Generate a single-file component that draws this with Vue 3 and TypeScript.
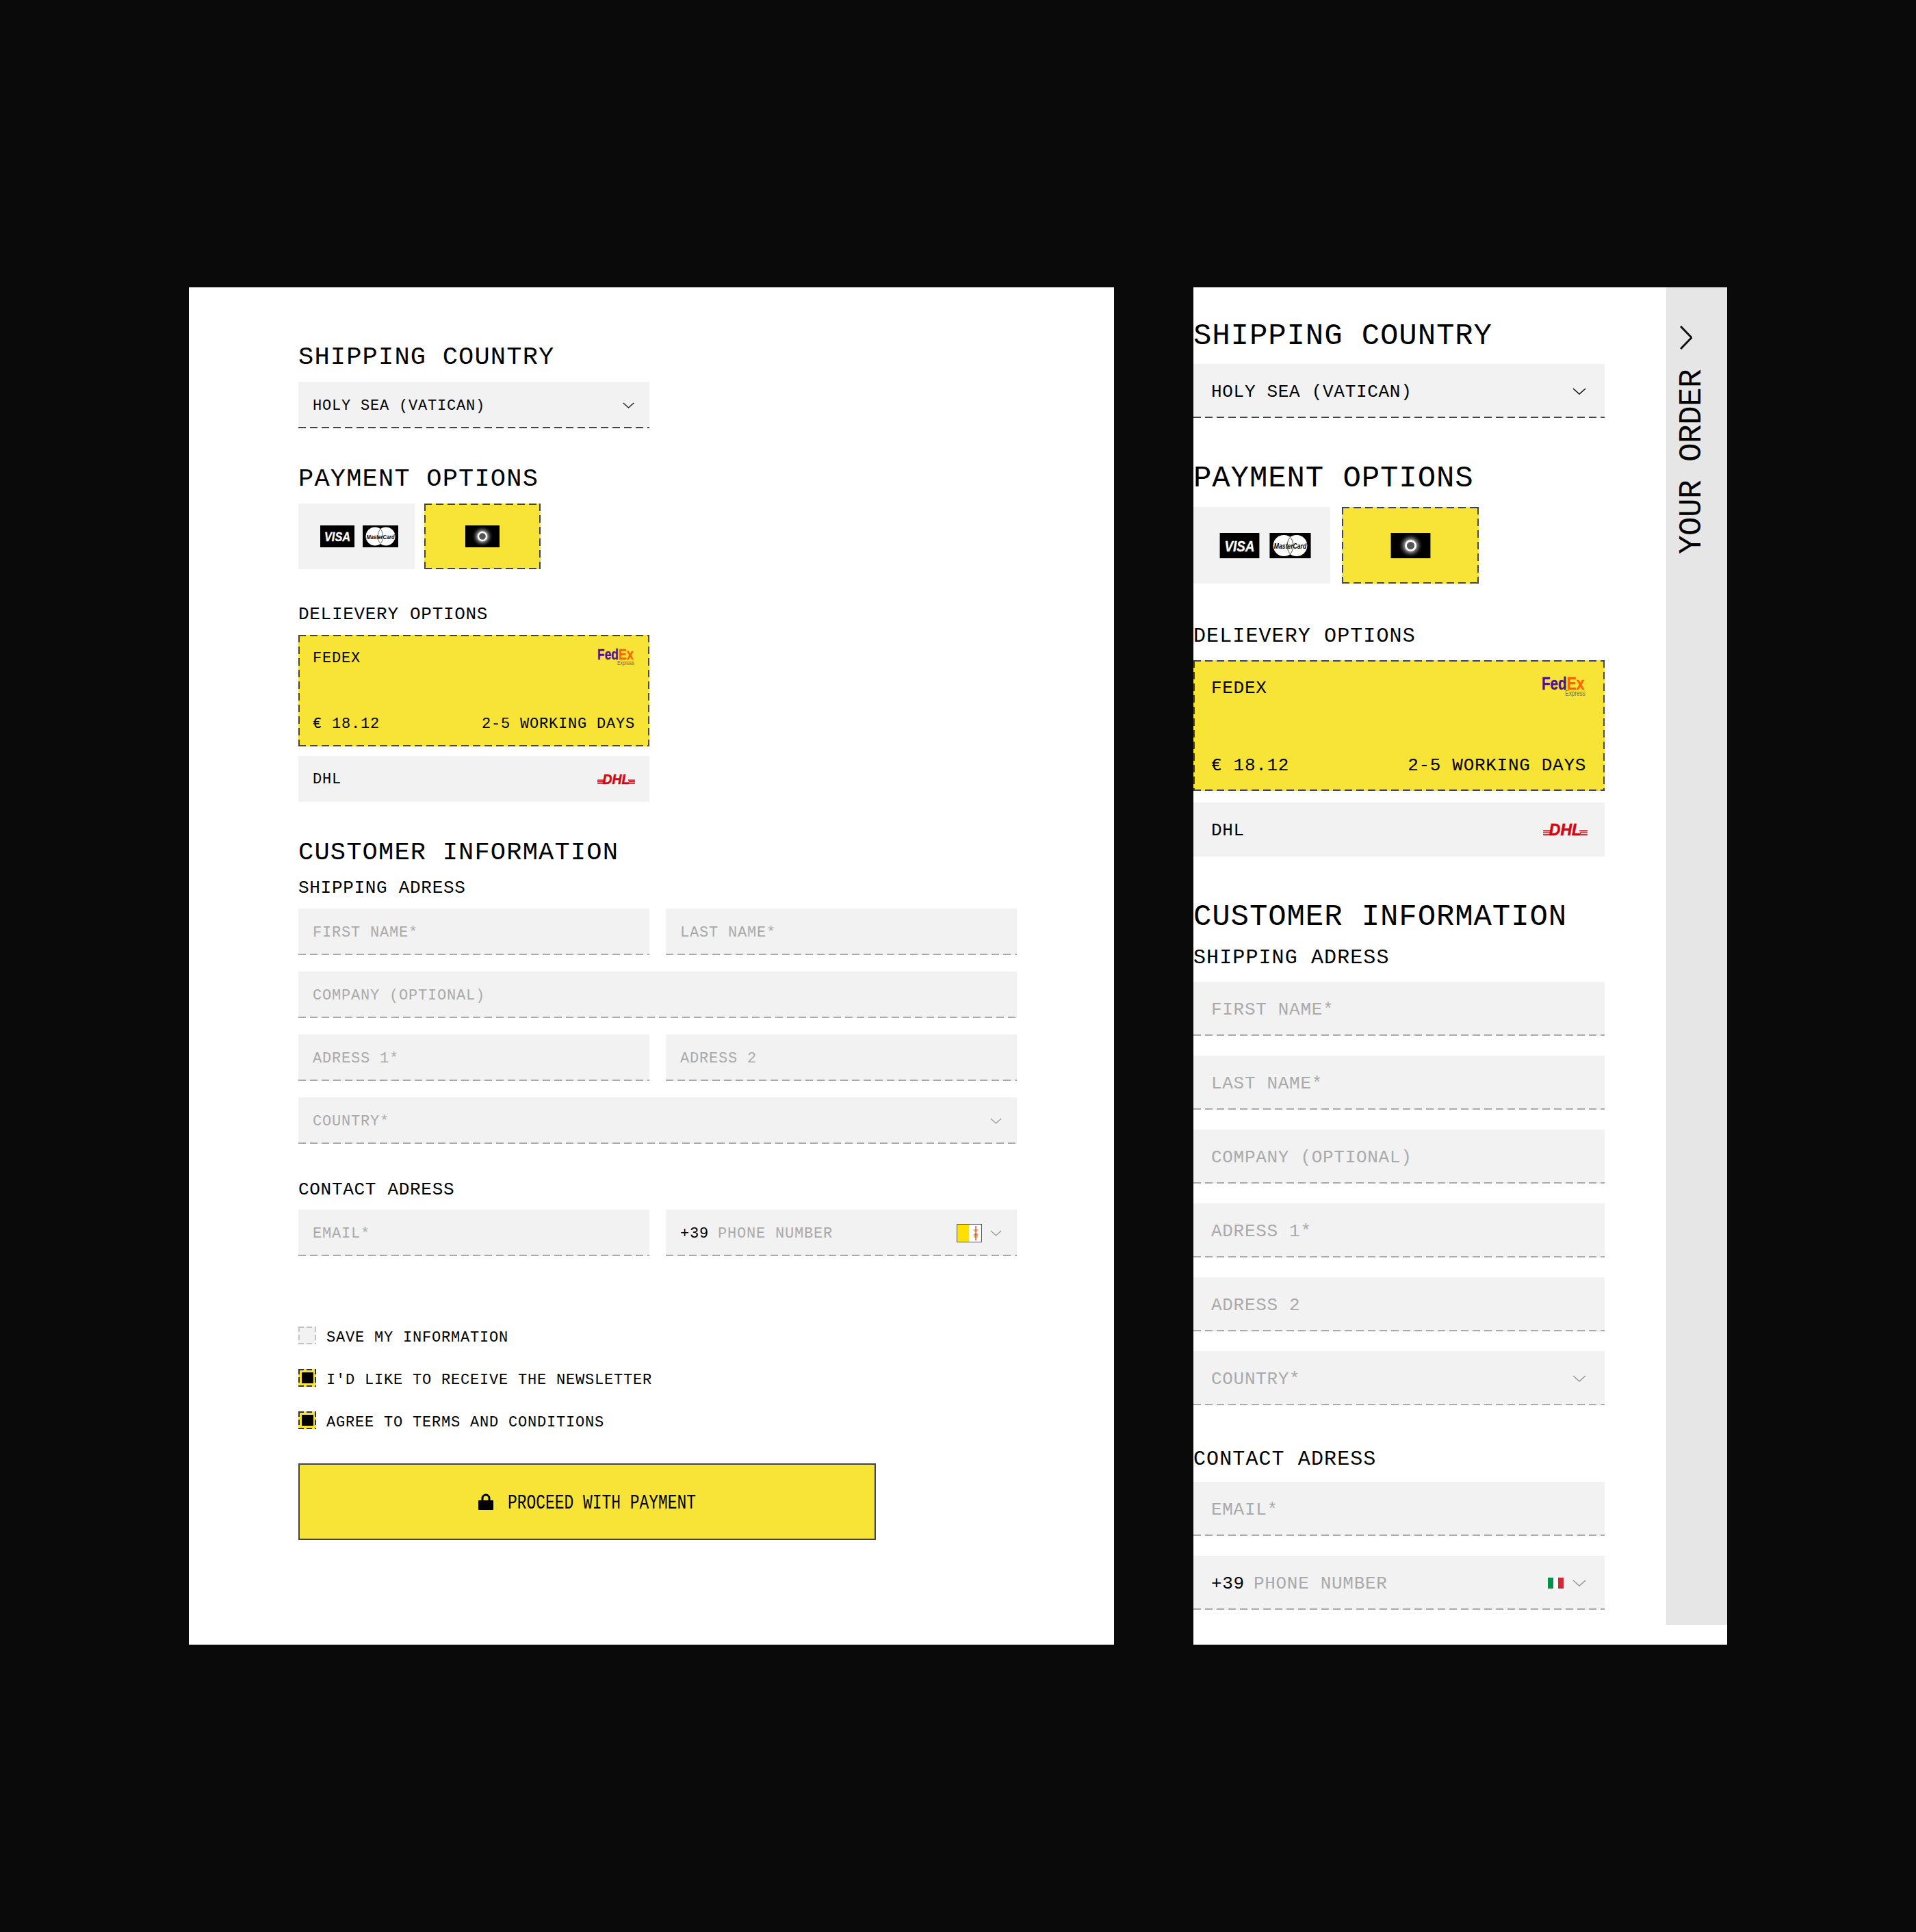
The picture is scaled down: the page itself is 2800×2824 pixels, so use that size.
<script setup lang="ts">
interface Field {
  label: string
  wide?: boolean
  chevron?: boolean
}

const panels = [
  { key: 'desk', desktop: true },
  { key: 'mob', desktop: false },
]

const shippingFields: Field[] = [
  { label: 'FIRST NAME*' },
  { label: 'LAST NAME*' },
  { label: 'COMPANY (OPTIONAL)', wide: true },
  { label: 'ADRESS 1*' },
  { label: 'ADRESS 2' },
  { label: 'COUNTRY*', wide: true, chevron: true },
]

const checks = [
  { label: 'SAVE MY INFORMATION', on: false },
  { label: "I'D LIKE TO RECEIVE THE NEWSLETTER", on: true },
  { label: 'AGREE TO TERMS AND CONDITIONS', on: true },
]
</script>

<template>
  <div class="page">
    <section v-for="p in panels" :key="p.key" class="panel" :class="p.key">
      <div class="form">
        <h2 class="big first">SHIPPING COUNTRY</h2>
        <div class="field dark">
          <span class="val">HOLY SEA (VATICAN)</span>
          <svg class="chev" viewBox="0 0 20 10"><path d="M1 1l9 8 9-8" fill="none" stroke="#111" stroke-width="1.6" /></svg>
        </div>

        <h2 class="big pay-head">PAYMENT OPTIONS</h2>
        <div class="pay-row">
          <div class="pay-box cards">
            <svg class="card-ico visa" viewBox="0 0 50 32">
              <rect width="50" height="32" fill="#000" />
              <text x="6" y="23" font-family="Liberation Sans" font-weight="700" font-style="italic" font-size="19" textLength="38" lengthAdjust="spacingAndGlyphs" fill="#fff" stroke="#fff" stroke-width=".3">VISA</text>
            </svg>
            <svg class="card-ico mc" viewBox="0 0 52 32">
              <rect width="52" height="32" fill="#000" />
              <circle cx="18" cy="16" r="13.500" fill="#fff" />
              <circle cx="34" cy="16" r="13.500" fill="#fff" />
              <path d="M26 5.500c-5 5-5 16 0 21M26 5.500c5 5 5 16 0 21" fill="none" stroke="#000" stroke-width=".6" />
              <text x="5.500" y="19.500" font-family="Liberation Sans" font-style="italic" font-weight="700" font-size="9.500" textLength="41" lengthAdjust="spacingAndGlyphs" fill="#000">MasterCard</text>
            </svg>
          </div>
          <div class="pay-box selected dash-all">
            <svg class="card-ico disc" viewBox="0 0 50 32">
              <defs>
                <radialGradient id="glow">
                  <stop offset="0.35" stop-color="#fff" stop-opacity=".85" />
                  <stop offset="1" stop-color="#000" stop-opacity="0" />
                </radialGradient>
              </defs>
              <rect width="50" height="32" fill="#000" />
              <circle cx="25" cy="16" r="16" :fill="'url(#glow)'" />
              <circle cx="25" cy="16" r="6" fill="#555" stroke="#fff" stroke-width="2.4" />
            </svg>
          </div>
        </div>

        <h3 class="mid deliv-head">DELIEVERY OPTIONS</h3>
        <div class="fedex dash-all">
          <div class="fedex-row">
            <span class="val">FEDEX</span>
            <svg class="fedex-logo" viewBox="0 -5 55 32">
              <text x="0" y="16" font-family="Liberation Sans" font-weight="700" font-size="22" textLength="31" lengthAdjust="spacingAndGlyphs" fill="#4d148c" stroke="#4d148c" stroke-width=".3">Fed</text>
              <text x="31" y="16" font-family="Liberation Sans" font-weight="700" font-size="22" textLength="22" lengthAdjust="spacingAndGlyphs" fill="#ff6200" stroke="#ff6200" stroke-width=".3">Ex</text>
              <text x="29" y="24" font-family="Liberation Sans" font-size="8.500" textLength="25" lengthAdjust="spacingAndGlyphs" fill="#6b6b5a">Express</text>
            </svg>
          </div>
          <div class="fedex-row bottom">
            <span class="val">€ 18.12</span>
            <span class="val">2-5 WORKING DAYS</span>
          </div>
        </div>
        <div class="dhl">
          <span class="val">DHL</span>
          <svg class="dhl-logo" viewBox="0 -4 55 22">
            <text x="7.500" y="14" font-family="Liberation Sans" font-weight="700" font-style="italic" font-size="19.500" textLength="40" lengthAdjust="spacingAndGlyphs" fill="#d40511" stroke="#d40511" stroke-width=".5">DHL</text>
            <path d="M0 8.200h10M0 10.600h9M0 13h8.500M45 8.200h10M45.500 10.600h9.500M46 13h9" stroke="#d40511" stroke-width="1.400" />
          </svg>
        </div>

        <h2 class="big cust-head">CUSTOMER INFORMATION</h2>
        <h3 class="mid ship-head">SHIPPING ADRESS</h3>
        <div class="grid">
          <div v-for="f in shippingFields" :key="f.label" class="field" :class="{ wide: f.wide }">
            <span class="ph">{{ f.label }}</span>
            <svg v-if="f.chevron" class="chev" viewBox="0 0 20 10"><path d="M1 1l9 8 9-8" fill="none" stroke="#999" stroke-width="1.600" /></svg>
          </div>
        </div>

        <h3 class="mid contact-head">CONTACT ADRESS</h3>
        <div class="grid">
          <div class="field"><span class="ph">EMAIL*</span></div>
          <div class="field">
            <span class="val code">+39</span>
            <span class="ph">PHONE NUMBER</span>
            <span class="spacer"></span>
            <svg v-if="p.desktop" class="flag va" viewBox="0 0 37 27">
              <rect width="18.500" height="27" fill="#ffe000" />
              <rect x="18.500" width="18.500" height="27" fill="#fff" />
              <path d="M24 8h8l-1.500 3h-5zM24 16h8l-1.500 4h-5z" fill="#e8c54a" />
              <path d="M28 3v21M25 15h6" stroke="#d33" stroke-width="1.200" />
              <rect x=".5" y=".5" width="36" height="26" fill="none" stroke="#555" />
            </svg>
            <svg v-else class="flag it" viewBox="0 0 23 16">
              <rect width="8" height="16" fill="#009246" />
              <rect x="8" width="7" height="16" fill="#fff" />
              <rect x="15" width="8" height="16" fill="#ce2b37" />
            </svg>
            <svg class="chev" viewBox="0 0 20 10"><path d="M1 1l9 8 9-8" fill="none" stroke="#999" stroke-width="1.600" /></svg>
          </div>
        </div>

        <template v-if="p.desktop">
          <ul class="checks">
            <li v-for="c in checks" :key="c.label" class="check">
              <span class="box" :class="c.on ? 'on' : 'off'"><i v-if="c.on"></i></span>
              <span class="val">{{ c.label }}</span>
            </li>
          </ul>
          <button class="proceed" type="button">
            <svg class="lock" viewBox="0 0 22 24">
              <path d="M6 11V7a5 5 0 0 1 10 0v4" fill="none" stroke="#000" stroke-width="3" />
              <rect y="10" width="22" height="14" rx="1" fill="#000" />
            </svg>
            <span class="proceed-text">PROCEED WITH PAYMENT</span>
          </button>
        </template>
      </div>

      <aside v-if="!p.desktop" class="side">
        <svg class="side-chev" viewBox="0 0 18 35"><path d="M1 1l16 16.500L1 34" fill="none" stroke="#111" stroke-width="3" /></svg>
        <span class="side-text">YOUR ORDER</span>
      </aside>
    </section>
  </div>
</template>

<style scoped>
.page {
  display: flex;
  gap: 116px;
  height: 2824px;
  box-sizing: border-box;
  padding: 420px 0 0 276px;
  background: #0a0a0a;
  font-family: "Liberation Mono", monospace;
  color: #000;
}

.panel {
  height: 1984px;
  box-sizing: border-box;
  background: #fff;
}

.desk {
  width: 1352px;
  padding: 82px 0 0 160px;
  --big: 37px;
  --big-ls: 1.2px;
  --big-h: 40px;
  --mid: 26px;
  --mid-ls: 0.7px;
  --mid-h: 29px;
  --small: 22px;
  --small-ls: 0.8px;
  --field-h: 68px;
  --pad: 21px;
  --gap: 24px;
}

.mob {
  width: 780px;
  padding: 0;
  display: flex;
  justify-content: space-between;
  --big: 44px;
  --big-ls: 0.9px;
  --big-h: 48px;
  --mid: 30px;
  --mid-ls: 1.1px;
  --mid-h: 33px;
  --small: 26px;
  --small-ls: 0.7px;
  --field-h: 79px;
  --pad: 26px;
  --gap: 29px;
}

.desk .form {
  width: 1050px;
}

.mob .form {
  width: 601px;
  padding-top: 47px;
}

h2,
h3 {
  margin: 0;
  font-weight: 400;
}

.big {
  font-size: var(--big);
  letter-spacing: var(--big-ls);
  line-height: var(--big-h);
  margin-bottom: 16px;
}

.mid {
  font-size: var(--mid);
  letter-spacing: var(--mid-ls);
  line-height: var(--mid-h);
  margin-bottom: 15px;
}

.val,
.ph {
  padding-top: 2px;
  font-size: var(--small);
  letter-spacing: var(--small-ls);
  white-space: nowrap;
}

.ph {
  color: #aaa;
}

.field {
  display: flex;
  align-items: center;
  width: 513px;
  height: var(--field-h);
  box-sizing: border-box;
  padding: 0 22px 0 var(--pad);
  background-color: #f2f2f2;
  background-image: repeating-linear-gradient(90deg, var(--line, #aaa) 0 11px, transparent 11px 17px);
  background-size: 100% 2px;
  background-position: bottom;
  background-repeat: no-repeat;
}

.field.dark {
  --line: #444;
  justify-content: space-between;
}

.field.wide {
  grid-column: 1 / -1;
  width: auto;
  justify-content: space-between;
}

.code {
  margin-right: 13px;
}

.spacer {
  flex: 1;
}

.chev {
  width: 17px;
  height: 9px;
  flex: none;
}

.dash-all {
  background-color: #f8e337;
  background-image:
    repeating-linear-gradient(90deg, #444 0 11px, transparent 11px 17px),
    repeating-linear-gradient(90deg, #444 0 11px, transparent 11px 17px),
    repeating-linear-gradient(180deg, #444 0 11px, transparent 11px 17px),
    repeating-linear-gradient(180deg, #444 0 11px, transparent 11px 17px);
  background-size: 100% 2px, 100% 2px, 2px 100%, 2px 100%;
  background-position: top, bottom, left, right;
  background-repeat: no-repeat;
}

.pay-row {
  display: flex;
  gap: 14px;
}

.pay-box {
  display: flex;
  align-items: center;
  justify-content: center;
  gap: 12px;
  width: 170px;
  height: 96px;
  box-sizing: border-box;
  background-color: #f2f2f2;
}

.pay-box.cards {
  padding-left: 7px;
}

.pay-box.selected {
  background-color: #f8e337;
}

.card-ico {
  height: 32px;
  width: 50px;
  flex: none;
}

.card-ico.mc {
  width: 52px;
}

.desk .pay-head {
  margin-top: 54px;
}

.desk .deliv-head {
  margin-top: 52px;
}

.desk .cust-head {
  margin-top: 54px;
  margin-bottom: 18px;
}

.desk .contact-head {
  margin-top: 53px;
  margin-bottom: 14px;
}

.fedex {
  display: flex;
  flex-direction: column;
  justify-content: space-between;
  width: 513px;
  height: 163px;
  box-sizing: border-box;
  padding: 20px 21px 19px;
}

.fedex-row {
  display: flex;
  align-items: flex-start;
  justify-content: space-between;
}

.fedex-row .val {
  line-height: 26px;
}

.fedex-logo {
  width: 55px;
  height: 32px;
  margin-top: -5px;
}

.dhl {
  display: flex;
  align-items: center;
  justify-content: space-between;
  width: 513px;
  height: 67px;
  margin-top: 14px;
  box-sizing: border-box;
  padding: 0 21px;
  background: #f2f2f2;
}

.dhl-logo {
  width: 55px;
  height: 22px;
}

.grid {
  display: grid;
  grid-template-columns: 513px 513px;
  gap: var(--gap);
}

.checks {
  list-style: none;
  margin: 103px 0 0;
  padding: 0;
  display: flex;
  flex-direction: column;
  gap: 36px;
}

.check {
  display: flex;
  align-items: center;
  gap: 15px;
  height: 26px;
}

.check .val {
  position: relative;
  top: 2px;
}

.box {
  display: flex;
  align-items: center;
  justify-content: center;
  width: 26px;
  height: 26px;
  box-sizing: border-box;
  background-image:
    repeating-linear-gradient(90deg, var(--edge) 0 8px, transparent 8px 12px),
    repeating-linear-gradient(90deg, var(--edge) 0 8px, transparent 8px 12px),
    repeating-linear-gradient(180deg, var(--edge) 0 8px, transparent 8px 12px),
    repeating-linear-gradient(180deg, var(--edge) 0 8px, transparent 8px 12px);
  background-size: 100% 2px, 100% 2px, 2px 100%, 2px 100%;
  background-position: top, bottom, left, right;
  background-repeat: no-repeat;
}

.box.off {
  --edge: #c4c4c4;
  background-color: #f2f2f2;
}

.box.on {
  --edge: #333;
  background-color: #f8e337;
}

.box i {
  display: block;
  width: 17px;
  height: 16px;
  background: #000;
}

.proceed {
  display: flex;
  align-items: center;
  justify-content: center;
  gap: 21px;
  width: 844px;
  height: 112px;
  margin-top: 50px;
  padding: 0;
  background: #f8e337;
  border: 2px solid #444;
  font-family: inherit;
  color: #000;
  cursor: pointer;
}

.lock {
  width: 22px;
  height: 24px;
}

.proceed-text {
  display: block;
  width: 275px;
  padding-top: 3px;
  font-size: 30px;
  line-height: 30px;
  white-space: nowrap;
  transform: scaleX(0.764);
  transform-origin: left center;
}

/* mobile column */
.mob .first {
  margin-bottom: 17px;
}

.mob .field,
.mob .fedex,
.mob .dhl {
  width: 601px;
}

.mob .field {
  padding-right: 27px;
}

.mob .chev {
  width: 20px;
  height: 10px;
}

.mob .pay-head {
  margin-top: 64px;
  margin-bottom: 18px;
}

.mob .pay-row {
  gap: 17px;
}

.mob .pay-box {
  width: 200px;
  height: 112px;
  gap: 14px;
}

.mob .pay-box.cards {
  padding-left: 9px;
}

.mob .card-ico {
  width: 59px;
  height: 37px;
}

.mob .card-ico.mc {
  width: 61px;
}

.mob .deliv-head {
  margin-top: 61px;
  margin-bottom: 18px;
}

.mob .fedex {
  height: 191px;
  padding: 24px 27px 22px 26px;
}

.mob .fedex-row .val {
  line-height: 30px;
}

.mob .fedex-logo {
  width: 65px;
  height: 38px;
  margin-top: -6px;
}

.mob .dhl {
  height: 79px;
  margin-top: 17px;
  padding: 0 25px 0 26px;
}

.mob .dhl-logo {
  width: 65px;
  height: 26px;
}

.mob .cust-head {
  margin-top: 64px;
  margin-bottom: 20px;
}

.mob .ship-head {
  margin-bottom: 18px;
}

.mob .grid {
  grid-template-columns: 601px;
}

.mob .contact-head {
  margin-top: 63px;
  margin-bottom: 16px;
}

.flag {
  flex: none;
  margin-right: 12px;
}

.flag.va {
  width: 37px;
  height: 27px;
}

.flag.it {
  width: 23px;
  height: 16px;
  margin-right: 13px;
}

.side {
  display: flex;
  flex-direction: column;
  align-items: flex-start;
  width: 89px;
  height: 1955px;
  box-sizing: border-box;
  padding: 56px 0 0 20px;
  background: #e6e6e6;
}

.side-chev {
  width: 18px;
  height: 35px;
}

.side-text {
  margin: 29px 0 0 -4px;
  writing-mode: vertical-rl;
  transform: rotate(180deg);
  font-size: 46px;
  line-height: 44px;
  letter-spacing: -0.6px;
  white-space: nowrap;
}
</style>

<style>
body {
  background: #0a0a0a;
}
</style>
